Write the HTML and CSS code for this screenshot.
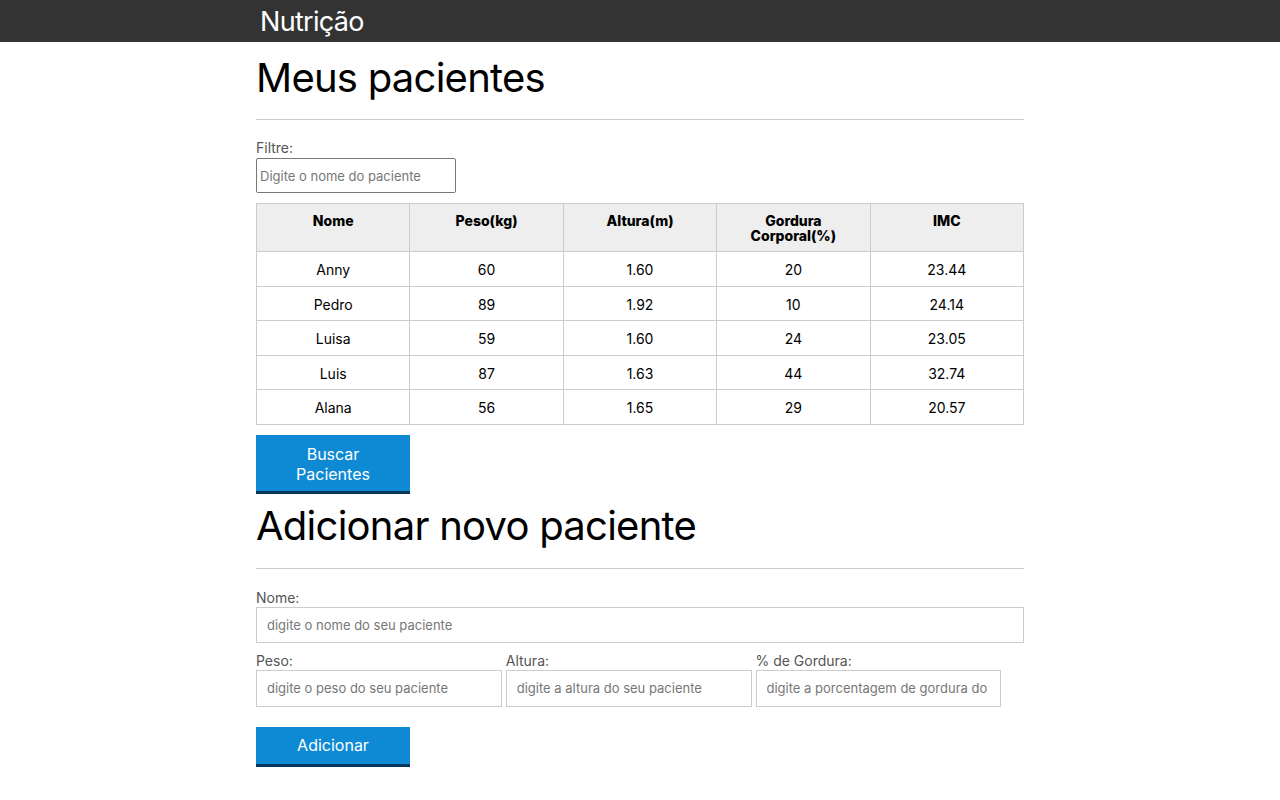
FILE: index.html
```html
<!DOCTYPE html>
<html lang="pt-BR">
<head>
<meta charset="utf-8">
<title>Nutrição</title>
<link rel="stylesheet" href="styles.css">
</head>
<body>
<header class="topbar">
  <div class="container">
    <h1 class="brand">Nutrição</h1>
  </div>
</header>
<main class="container">
  <section>
    <h2 class="title title-first">Meus pacientes</h2>
    <label class="label label-filter" for="filtro">Filtre:</label>
    <input class="filter" id="filtro" type="text" placeholder="Digite o nome do paciente">
    <table class="patients">
      <thead>
        <tr>
          <th>Nome</th>
          <th>Peso(kg)</th>
          <th>Altura(m)</th>
          <th>Gordura Corporal(%)</th>
          <th>IMC</th>
        </tr>
      </thead>
      <tbody>
        <tr><td>Anny</td><td>60</td><td>1.60</td><td>20</td><td>23.44</td></tr>
        <tr><td>Pedro</td><td>89</td><td>1.92</td><td>10</td><td>24.14</td></tr>
        <tr><td>Luisa</td><td>59</td><td>1.60</td><td>24</td><td>23.05</td></tr>
        <tr><td>Luis</td><td>87</td><td>1.63</td><td>44</td><td>32.74</td></tr>
        <tr><td>Alana</td><td>56</td><td>1.65</td><td>29</td><td>20.57</td></tr>
      </tbody>
    </table>
    <button class="btn btn-two" type="button">Buscar Pacientes</button>
  </section>
  <section>
    <h2 class="title title-second">Adicionar novo paciente</h2>
    <form class="form">
      <div class="field">
        <label class="label" for="nome">Nome:</label>
        <input class="input" id="nome" type="text" placeholder="digite o nome do seu paciente">
      </div>
      <div class="row">
        <div class="field col">
          <label class="label" for="peso">Peso:</label>
          <input class="input" id="peso" type="text" placeholder="digite o peso do seu paciente">
        </div>
        <div class="field col">
          <label class="label" for="altura">Altura:</label>
          <input class="input" id="altura" type="text" placeholder="digite a altura do seu paciente">
        </div>
        <div class="field col">
          <label class="label" for="gordura">% de Gordura:</label>
          <input class="input" id="gordura" type="text" placeholder="digite a porcentagem de gordura do seu paciente">
        </div>
      </div>
      <button class="btn btn-one" type="button">Adicionar</button>
    </form>
  </section>
</main>
</body>
</html>
```

FILE: styles.css
```css
* {
  box-sizing: border-box;
}

body {
  margin: 0;
  font-family: Inter, "Noto Sans", sans-serif;
  color: #000;
  background: #fff;
}

.container {
  width: 768px;
  margin: 0 auto;
}

.topbar {
  background: #333;
  height: 42px;
}

.brand {
  margin: 0;
  padding-left: 4px;
  padding-top: 1px;
  font-size: 27px;
  font-weight: 400;
  line-height: 41px;
  letter-spacing: -0.7px;
  color: #fff;
}

.title {
  margin: 0;
  font-size: 40px;
  font-weight: 400;
  line-height: 48px;
  letter-spacing: -0.75px;
  border-bottom: 1px solid #ccc;
}

.title-first {
  margin-top: 12px;
  padding-bottom: 17px;
  margin-bottom: 20px;
}

.title-second {
  margin-top: 8px;
  padding-bottom: 18px;
  margin-bottom: 20px;
}

.label {
  display: block;
  font-size: 14px;
  line-height: 17px;
  color: #555;
}

.label-filter {
  line-height: 16px;
}

.filter {
  display: block;
  width: 200px;
  height: 35px;
  margin-top: 2px;
  padding: 0 3px;
  border: 1px solid #777;
  border-radius: 2px;
  font-family: inherit;
  font-size: 13px;
  color: #333;
}

.filter::placeholder,
.input::placeholder {
  color: #777;
}

.patients {
  width: 100%;
  margin-top: 10px;
  border-collapse: collapse;
  table-layout: fixed;
  font-size: 14px;
}

.patients th,
.patients td {
  border: 1px solid #ccc;
  text-align: center;
}

.patients th {
  background: #eee;
  font-weight: 800;
  line-height: 15px;
  padding: 9px 20px 8px;
  vertical-align: top;
}

.patients td {
  padding: 9px 4px 7px;
  line-height: 17.6px;
}

.btn {
  display: block;
  width: 154px;
  border: 0;
  border-bottom: 3px solid #063659;
  background: #0e8ad4;
  color: #fff;
  font-family: inherit;
  font-size: 16px;
  line-height: 20px;
  border-radius: 0;
  padding: 0 20px;
}

.btn-two {
  margin-top: 10px;
  padding-top: 9px;
  padding-bottom: 7px;
}

.btn-one {
  margin-top: 20px;
  padding-top: 8px;
  padding-bottom: 9px;
}

.field {
  display: flex;
  flex-direction: column;
}

.input {
  height: 36px;
  margin-top: 1px;
  padding: 0 10px;
  border: 1px solid #ccc;
  border-radius: 0;
  font-family: inherit;
  font-size: 13px;
  color: #333;
}

.row {
  display: flex;
  gap: 4px;
  margin-top: 9px;
}

.col {
  width: 32%;
}

.col .input {
  height: 37px;
}
```
